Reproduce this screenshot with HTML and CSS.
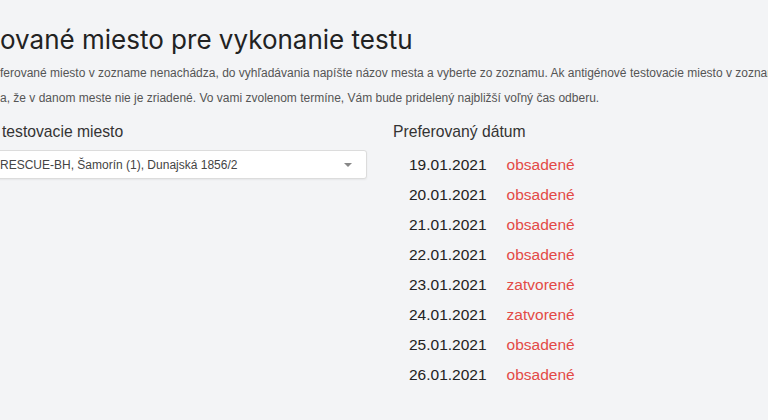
FILE: index.html
```html
<!DOCTYPE html>
<html lang="sk">
<head>
<meta charset="utf-8">
<title>Preferované miesto</title>
<link rel="stylesheet" href="styles.css">
</head>
<body>
<main class="page">
  <h1 class="title">ované miesto pre vykonanie testu</h1>
  <p class="intro">
    <span class="line">ferované miesto v zozname nenachádza, do vyhľadávania napíšte názov mesta a vyberte zo zoznamu. Ak antigénové testovacie miesto v zozname nie je</span>
    <span class="line">a, že v danom meste nie je zriadené. Vo vami zvolenom termíne, Vám bude pridelený najbližší voľný čas odberu.</span>
  </p>
  <div class="cols">
    <section class="place">
      <div class="label label-left">testovacie miesto</div>
      <div class="select">
        <span class="select-text">RESCUE-BH, Šamorín (1), Dunajská 1856/2</span>
        <span class="caret"></span>
      </div>
    </section>
    <section class="dates">
      <div class="label">Preferovaný dátum</div>
      <ul class="date-list">
        <li class="row"><span class="date">19.01.2021</span><span class="status">obsadené</span></li>
        <li class="row"><span class="date">20.01.2021</span><span class="status">obsadené</span></li>
        <li class="row"><span class="date">21.01.2021</span><span class="status">obsadené</span></li>
        <li class="row"><span class="date">22.01.2021</span><span class="status">obsadené</span></li>
        <li class="row"><span class="date">23.01.2021</span><span class="status">zatvorené</span></li>
        <li class="row"><span class="date">24.01.2021</span><span class="status">zatvorené</span></li>
        <li class="row"><span class="date">25.01.2021</span><span class="status">obsadené</span></li>
        <li class="row"><span class="date">26.01.2021</span><span class="status">obsadené</span></li>
      </ul>
    </section>
  </div>
</main>
</body>
</html>
```

FILE: styles.css
```css
html, body {
  margin: 0;
  padding: 0;
  background: #f3f4f6;
  overflow: hidden;
}
body {
  width: 768px;
  height: 420px;
  font-family: "Liberation Sans", Arial, sans-serif;
  color: #333;
}
.page {
  padding-top: 22px;
}
.title {
  margin: 0;
  font-family: Inter, "Open Sans", sans-serif;
  font-weight: 400;
  font-size: 26px;
  line-height: 36px;
  color: #222;
  white-space: nowrap;
}
.intro {
  margin: 3px 0 0 0;
  font-size: 12px;
  line-height: 25px;
  color: #555;
  white-space: nowrap;
}
.line {
  display: block;
}
.cols {
  margin-top: 11px;
  display: grid;
  grid-template-columns: 367px 1fr;
  column-gap: 26px;
}
.label {
  font-size: 15.7px;
  line-height: 20px;
  color: #333;
}
.label-left {
  margin-left: 2px;
}
.select {
  margin-top: 8px;
  margin-left: -40px;
  height: 29px;
  box-sizing: border-box;
  background: #fff;
  border: 1px solid #dcdcdc;
  border-radius: 3px;
  box-shadow: 0 1px 2px rgba(0,0,0,0.06);
  display: flex;
  align-items: center;
  justify-content: space-between;
  padding: 0 14px 0 39px;
}
.select-text {
  font-size: 12px;
  color: #444;
}
.caret {
  width: 0;
  height: 0;
  border-left: 4px solid transparent;
  border-right: 4px solid transparent;
  border-top: 4px solid #888;
}
.date-list {
  list-style: none;
  margin: 8px 0 0 0;
  padding: 0 0 0 16px;
}
.row {
  display: flex;
  gap: 20px;
  height: 30px;
  align-items: center;
  font-size: 15.5px;
}
.date {
  color: #222;
}
.status {
  color: #e34a46;
}
```
